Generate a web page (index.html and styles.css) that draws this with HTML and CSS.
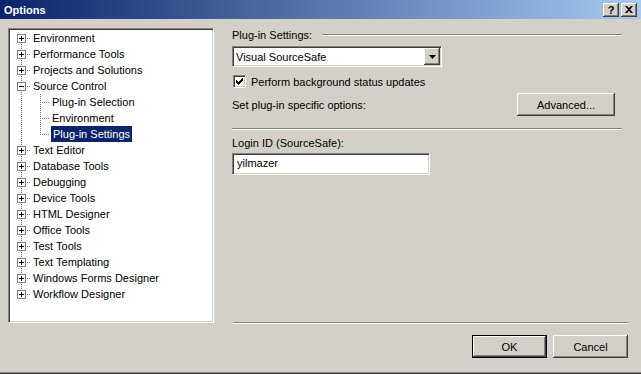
FILE: index.html
```html
<!DOCTYPE html>
<html lang="en">
<head>
    <meta charset="UTF-8">
    <title>Options</title>
    <link rel="stylesheet" href="styles.css">
</head>
<body>

<div class="window">
    <div class="titlebar">
        <span class="title">Options</span>
        <span class="caption-btns">
            <span class="cbtn help">?</span>
            <span class="cbtn close">
                <svg width="8" height="7" viewBox="0 0 8 7"><path d="M0 0h2l2 2 2-2h2L5 3.5 8 7H6L4 5 2 7H0l3-3.5z" fill="#000"/></svg>
            </span>
        </span>
    </div>

    <div class="main">
        <!-- category tree -->
        <div class="tree sunken">
            <div class="row"><span class="twig top"><svg class="box" width="9" height="9"><rect x=".5" y=".5" width="8" height="8" fill="#fff" stroke="#808080"/><path d="M2 4.5h5M4.5 2v5" stroke="#000"/></svg></span><span class="label">Environment</span></div>
            <div class="row"><span class="twig tee"><svg class="box" width="9" height="9"><rect x=".5" y=".5" width="8" height="8" fill="#fff" stroke="#808080"/><path d="M2 4.5h5M4.5 2v5" stroke="#000"/></svg></span><span class="label">Performance Tools</span></div>
            <div class="row"><span class="twig tee"><svg class="box" width="9" height="9"><rect x=".5" y=".5" width="8" height="8" fill="#fff" stroke="#808080"/><path d="M2 4.5h5M4.5 2v5" stroke="#000"/></svg></span><span class="label">Projects and Solutions</span></div>
            <div class="row"><span class="twig tee"><svg class="box" width="9" height="9"><rect x=".5" y=".5" width="8" height="8" fill="#fff" stroke="#808080"/><path d="M2 4.5h5" stroke="#000"/></svg></span><span class="label">Source Control</span></div>
            <div class="row"><span class="twig pipe"></span><span class="twig tee"></span><span class="label">Plug-in Selection</span></div>
            <div class="row"><span class="twig pipe"></span><span class="twig tee"></span><span class="label">Environment</span></div>
            <div class="row"><span class="twig pipe"></span><span class="twig ell"></span><span class="label sel">Plug-in Settings</span></div>
            <div class="row"><span class="twig tee"><svg class="box" width="9" height="9"><rect x=".5" y=".5" width="8" height="8" fill="#fff" stroke="#808080"/><path d="M2 4.5h5M4.5 2v5" stroke="#000"/></svg></span><span class="label">Text Editor</span></div>
            <div class="row"><span class="twig tee"><svg class="box" width="9" height="9"><rect x=".5" y=".5" width="8" height="8" fill="#fff" stroke="#808080"/><path d="M2 4.5h5M4.5 2v5" stroke="#000"/></svg></span><span class="label">Database Tools</span></div>
            <div class="row"><span class="twig tee"><svg class="box" width="9" height="9"><rect x=".5" y=".5" width="8" height="8" fill="#fff" stroke="#808080"/><path d="M2 4.5h5M4.5 2v5" stroke="#000"/></svg></span><span class="label">Debugging</span></div>
            <div class="row"><span class="twig tee"><svg class="box" width="9" height="9"><rect x=".5" y=".5" width="8" height="8" fill="#fff" stroke="#808080"/><path d="M2 4.5h5M4.5 2v5" stroke="#000"/></svg></span><span class="label">Device Tools</span></div>
            <div class="row"><span class="twig tee"><svg class="box" width="9" height="9"><rect x=".5" y=".5" width="8" height="8" fill="#fff" stroke="#808080"/><path d="M2 4.5h5M4.5 2v5" stroke="#000"/></svg></span><span class="label">HTML Designer</span></div>
            <div class="row"><span class="twig tee"><svg class="box" width="9" height="9"><rect x=".5" y=".5" width="8" height="8" fill="#fff" stroke="#808080"/><path d="M2 4.5h5M4.5 2v5" stroke="#000"/></svg></span><span class="label">Office Tools</span></div>
            <div class="row"><span class="twig tee"><svg class="box" width="9" height="9"><rect x=".5" y=".5" width="8" height="8" fill="#fff" stroke="#808080"/><path d="M2 4.5h5M4.5 2v5" stroke="#000"/></svg></span><span class="label">Test Tools</span></div>
            <div class="row"><span class="twig tee"><svg class="box" width="9" height="9"><rect x=".5" y=".5" width="8" height="8" fill="#fff" stroke="#808080"/><path d="M2 4.5h5M4.5 2v5" stroke="#000"/></svg></span><span class="label">Text Templating</span></div>
            <div class="row"><span class="twig tee"><svg class="box" width="9" height="9"><rect x=".5" y=".5" width="8" height="8" fill="#fff" stroke="#808080"/><path d="M2 4.5h5M4.5 2v5" stroke="#000"/></svg></span><span class="label">Windows Forms Designer</span></div>
            <div class="row"><span class="twig ell"><svg class="box" width="9" height="9"><rect x=".5" y=".5" width="8" height="8" fill="#fff" stroke="#808080"/><path d="M2 4.5h5M4.5 2v5" stroke="#000"/></svg></span><span class="label">Workflow Designer</span></div>
        </div>

        <!-- settings page -->
        <div class="pane">
            <div class="heading"><span>Plug-in Settings:</span><span class="rule"></span></div>

            <div class="combo sunken">
                <span class="combo-text">Visual SourceSafe</span>
                <span class="combo-btn raised">
                    <svg width="7" height="4" viewBox="0 0 7 4"><path d="M0 0h7L3.5 4z" fill="#000"/></svg>
                </span>
            </div>

            <div class="check">
                <span class="checkbox sunken">
                    <svg width="7" height="7" viewBox="0 0 7 7" fill="#000"><rect x="0" y="2" width="1" height="3"/><rect x="1" y="3" width="1" height="3"/><rect x="2" y="4" width="1" height="3"/><rect x="3" y="3" width="1" height="3"/><rect x="4" y="2" width="1" height="3"/><rect x="5" y="1" width="1" height="3"/><rect x="6" y="0" width="1" height="3"/></svg>
                </span>
                <span>Perform background status updates</span>
            </div>

            <div class="opt-row">
                <span>Set plug-in specific options:</span>
                <button class="btn raised adv">Advanced...</button>
            </div>

            <div class="sep"></div>

            <div class="field-label">Login ID (SourceSafe):</div>
            <div class="textbox sunken">yilmazer</div>

            <div class="foot">
                <div class="sep wide"></div>
                <div class="buttons">
                    <button class="btn raised default">OK</button>
                    <button class="btn raised">Cancel</button>
                </div>
            </div>
        </div>
    </div>
</div>

</body>
</html>
```

FILE: styles.css
```css
body { margin: 0; font-family: "Liberation Sans", Arial, sans-serif; font-size: 11px; color: #000; }

.window { width: 641px; height: 374px; background: #d4d0c8; display: flex; flex-direction: column; overflow: hidden; box-shadow: inset 0 -1px #404040, inset 0 -2px #808080; }

/* title bar */
.titlebar { height: 19px; flex-shrink: 0; display: flex; align-items: center; justify-content: space-between; padding: 0 4px 0 4px; background: linear-gradient(90deg, #0a246a, #a6caf0); }
.title { color: #fff; font-weight: bold; font-size: 11px; }
.caption-btns { display: flex; gap: 2px; }
.cbtn { width: 16px; height: 14px; box-sizing: border-box; display: flex; align-items: center; justify-content: center; background: #d4d0c8; font-weight: bold; font-size: 11px; line-height: 14px;
        box-shadow: inset -1px -1px #404040, inset 1px 1px #fff, inset -2px -2px #808080, inset 2px 2px #d4d0c8; }

/* 3d edges */
.sunken { border: 1px solid; border-color: #808080 #fff #fff #808080; box-shadow: inset 1px 1px #404040, inset -1px -1px #d4d0c8; background: #fff; box-sizing: border-box; }
.raised { background: #d4d0c8; box-sizing: border-box; box-shadow: inset -1px -1px #404040, inset 1px 1px #fff, inset -2px -2px #808080, inset 2px 2px #d4d0c8; }

.main { flex: 1; display: flex; align-items: flex-start; gap: 18px; padding: 9px 13px 0 8px; }

/* tree */
.tree { width: 206px; height: 295px; flex-shrink: 0; padding: 1px 0 0 3px; }
.row { display: flex; height: 16px; }
.twig { width: 19px; height: 16px; flex-shrink: 0; background-repeat: no-repeat; }
.twig .box { display: block; margin: 4px 0 0 5px; }
.tee, .top, .ell { background-image: repeating-linear-gradient(to bottom, #808080 0 1px, transparent 1px 2px), repeating-linear-gradient(to right, #808080 0 1px, transparent 1px 2px); }
.tee { background-size: 1px 16px, 10px 1px; background-position: 9px 0, 9px 8px; }
.top { background-size: 1px 8px, 10px 1px; background-position: 9px 8px, 9px 8px; }
.ell { background-size: 1px 9px, 10px 1px; background-position: 9px 0, 9px 8px; }
.pipe { background-image: repeating-linear-gradient(to bottom, #808080 0 1px, transparent 1px 2px); background-size: 1px 16px; background-position: 9px 0; }
.label { padding: 0 2px; line-height: 16px; white-space: nowrap; }
.label.sel { background: #0a246a; color: #fff; margin-left: 1px; }

/* right page */
.pane { flex: 1; height: 330px; display: flex; flex-direction: column; }
.heading { display: flex; align-items: center; height: 14px; }
.rule { flex: 1; margin: 0 6px 0 10px; border-top: 1px solid #808080; border-bottom: 1px solid #fff; }

.combo { margin-top: 4px; width: 210px; height: 21px; display: flex; align-items: center; padding: 1px; }
.combo-text { flex: 1; padding-left: 2px; }
.combo-btn { width: 16px; height: 17px; display: flex; align-items: center; justify-content: center; }

.check { margin-top: 8px; height: 13px; display: flex; align-items: center; gap: 5px; }
.checkbox { width: 13px; height: 13px; margin-left: 1px; display: flex; align-items: center; justify-content: center; }

.opt-row { margin-top: 5px; display: flex; align-items: center; justify-content: space-between; padding-right: 13px; }
.btn { width: 75px; height: 23px; border: none; padding: 0; font: inherit; color: #000; }
.btn.adv { width: 98px; }
.btn.default { border: 1px solid #000; }

.sep { margin: 12px 6px 0 0; border-top: 1px solid #808080; border-bottom: 1px solid #fff; }
.sep.wide { margin: 0 0 0 1px; }

.field-label { margin-top: 6px; line-height: 14px; }
.textbox { margin-top: 3px; width: 198px; height: 22px; padding-left: 4px; line-height: 18px; }

.foot { margin-top: auto; }
.buttons { margin-top: 11px; display: flex; justify-content: flex-end; gap: 6px; }
```
